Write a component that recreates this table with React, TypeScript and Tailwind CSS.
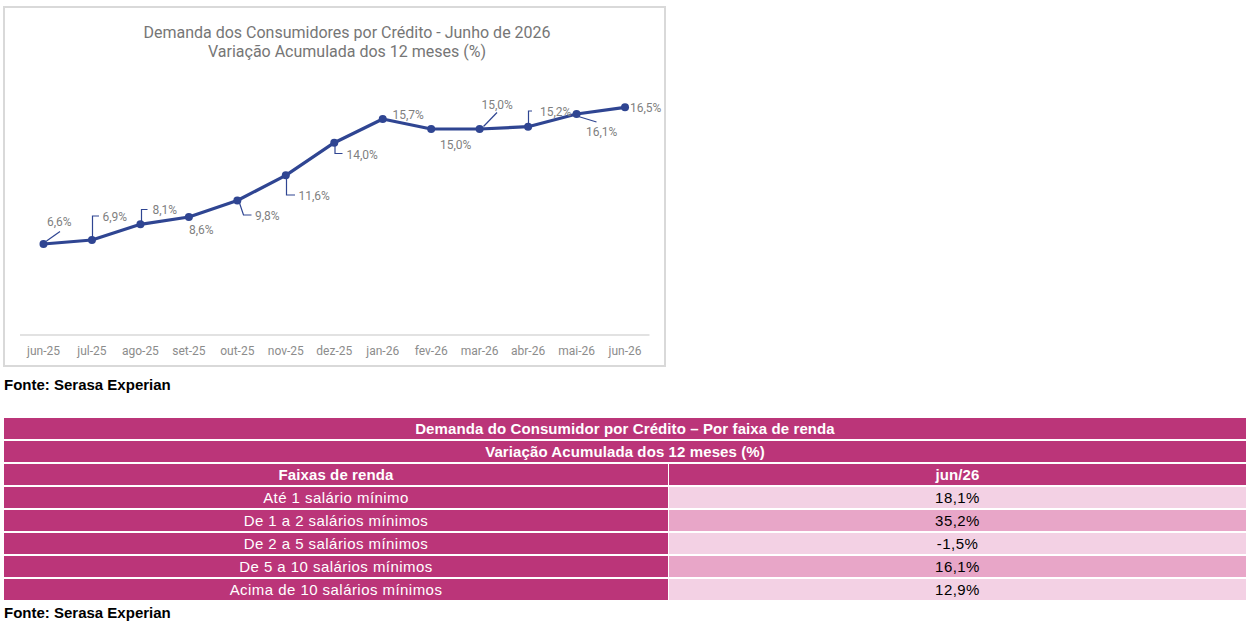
import React from 'react';

const months = [
  'jun-25', 'jul-25', 'ago-25', 'set-25', 'out-25', 'nov-25', 'dez-25',
  'jan-26', 'fev-26', 'mar-26', 'abr-26', 'mai-26', 'jun-26',
];

// y positions of each month's point on the chart (page px)
const ys = [244, 240, 224.3, 217, 200.5, 175.3, 142.7, 119, 129, 129, 126.7, 114, 107.3];
const xs = months.map((_, i) => 43.5 + 48.46 * i);

type Label = { text: string; x: number; y: number; leader?: string };

const labels: Label[] = [
  { text: '6,6%', x: 47, y: 222, leader: '46.5,241 60,231.5' },
  { text: '6,9%', x: 102.5, y: 217, leader: '92.5,239 92.5,216 99,216' },
  { text: '8,1%', x: 152.5, y: 209.5, leader: '141.5,223 141.5,209.5 147.5,209.5' },
  { text: '8,6%', x: 189, y: 229.5 },
  { text: '9,8%', x: 255, y: 215.5, leader: '239.5,203 243.5,215 251.5,215' },
  { text: '11,6%', x: 298.5, y: 195.5, leader: '286.5,177 286.5,195 295,195' },
  { text: '14,0%', x: 346.5, y: 154.5, leader: '335,145 335,153.5 342.5,153.5' },
  { text: '15,7%', x: 392.5, y: 114.5 },
  { text: '15,0%', x: 440, y: 144.5 },
  { text: '15,0%', x: 481.5, y: 105, leader: '483.5,126.5 497,112.5' },
  { text: '15,2%', x: 540, y: 112, leader: '528.5,125 528.5,111 532,111' },
  { text: '16,1%', x: 586, y: 131.5, leader: '578.5,116.5 596.5,122' },
  { text: '16,5%', x: 630, y: 108 },
];

const Chart: React.FC = () => {
  const line = xs.map((x, i) => `${x},${ys[i]}`).join(' ');
  return (
    <div className="w-[663px] h-[361px] border-2 border-[#d9d9d9] bg-white">
      <svg width="659" height="357" viewBox="5 8 659 357" className="block" style={{ fontFamily: 'Roboto, "Liberation Sans", sans-serif' }}>
        <text x="347" y="32" textAnchor="middle" dominantBaseline="central" fontSize="16" fill="#767676">
          Demanda dos Consumidores por Crédito - Junho de 2026
        </text>
        <text x="347" y="51.5" textAnchor="middle" dominantBaseline="central" fontSize="16" fill="#767676">
          Variação Acumulada dos 12 meses (%)
        </text>

        <line x1="20" y1="335" x2="649.5" y2="335" stroke="#d9d9d9" strokeWidth="1.5" />
        {months.map((m, i) => (
          <text key={m} x={xs[i]} y="350.5" textAnchor="middle" dominantBaseline="central" fontSize="12" fill="#8c8c8c">
            {m}
          </text>
        ))}

        {labels.map((l, i) =>
          l.leader ? (
            <polyline key={'l' + i} points={l.leader} fill="none" stroke="#2f4592" strokeWidth="1.2" />
          ) : null,
        )}

        <polyline points={line} fill="none" stroke="#2f4592" strokeWidth="3.2" strokeLinejoin="round" />
        {xs.map((x, i) => (
          <circle key={i} cx={x} cy={ys[i]} r="4" fill="#2f4592" />
        ))}

        {labels.map((l, i) => (
          <text key={'t' + i} x={l.x} y={l.y} dominantBaseline="central" fontSize="12" fill="#7f7f7f">
            {l.text}
          </text>
        ))}
      </svg>
    </div>
  );
};

const rows = [
  { faixa: 'Até 1 salário mínimo', value: '18,1%' },
  { faixa: 'De 1 a 2 salários mínimos', value: '35,2%' },
  { faixa: 'De 2 a 5 salários mínimos', value: '-1,5%' },
  { faixa: 'De 5 a 10 salários mínimos', value: '16,1%' },
  { faixa: 'Acima de 10 salários mínimos', value: '12,9%' },
];

const head = 'h-[21px] bg-[#bb3579] text-white font-bold tracking-[0.1px] flex items-center justify-center';
const cell = 'h-[21px] flex items-center justify-center tracking-[0.45px]';

const IncomeTable: React.FC = () => (
  <div className="w-[1242px] flex flex-col gap-[2px] text-[15px] leading-none">
    <div className={head}>Demanda do Consumidor por Crédito – Por faixa de renda</div>
    <div className={head}>Variação Acumulada dos 12 meses (%)</div>
    <div className="grid grid-cols-[664px_1fr] gap-x-[1px]">
      <div className={head}>Faixas de renda</div>
      <div className={head}>jun/26</div>
    </div>
    {rows.map((r, i) => (
      <div key={r.faixa} className="grid grid-cols-[664px_1fr] gap-x-[1px]">
        <div className={cell + ' bg-[#bb3579] text-white'}>{r.faixa}</div>
        <div className={cell + (i % 2 === 0 ? ' bg-[#f3d1e4] text-black' : ' bg-[#e8a6c8] text-black')}>
          {r.value}
        </div>
      </div>
    ))}
  </div>
);

export default function App() {
  return (
    <div
      className="w-[1256px] h-[621px] bg-white overflow-hidden pl-[3px] pt-[6px]"
      style={{ fontFamily: '"Liberation Sans", Arial, sans-serif' }}
    >
      <Chart />
      <p className="mt-[10px] ml-[1px] text-[15px] leading-[16px] font-bold text-black">Fonte: Serasa Experian</p>
      <div className="mt-[25px] ml-[1px]">
        <IncomeTable />
      </div>
      <p className="mt-[5px] ml-[1px] text-[15px] leading-[16px] font-bold text-black">Fonte: Serasa Experian</p>
    </div>
  );
}
